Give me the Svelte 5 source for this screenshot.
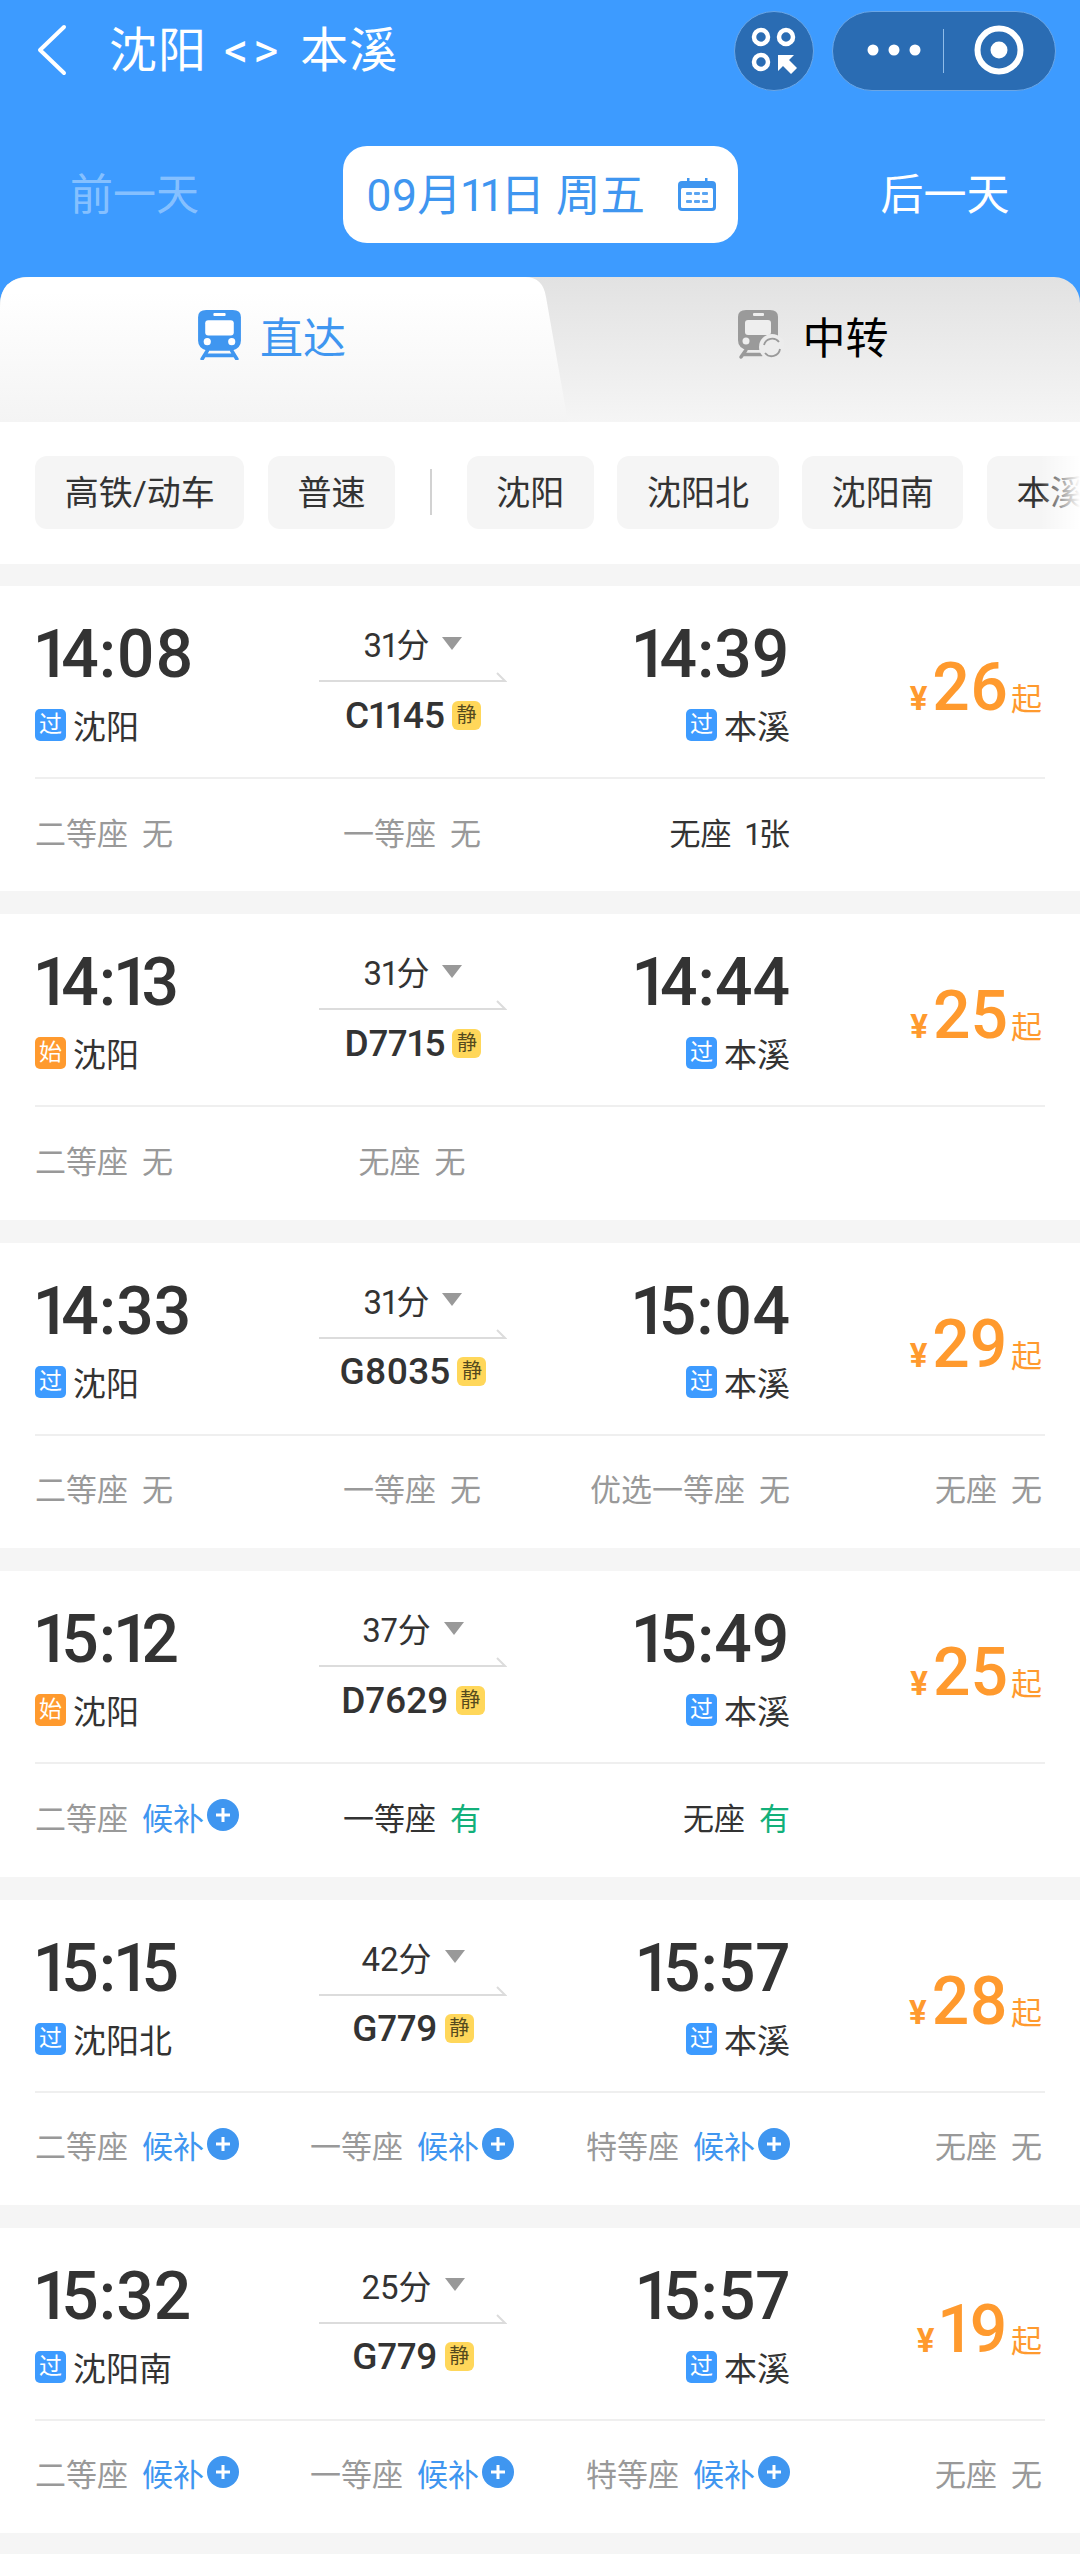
<script>
  const full = (name) => ({ name, status: '无', kind: 'none' });
  const wait = (name) => ({ name, status: '候补', kind: 'wait' });
  const have = (name, status = '有') => ({ name, status, kind: 'have' });

  const filters = ['沈阳', '沈阳北', '沈阳南', '本溪'];

  const trains = [
    { dep: '14:08', badge: '过', from: '沈阳', dur: '31分', no: 'C1145', arr: '14:39', price: 26,
      seats: [full('二等座'), full('一等座'), { name: '无座', status: '1张', kind: 'count' }, null] },
    { dep: '14:13', badge: '始', from: '沈阳', dur: '31分', no: 'D7715', arr: '14:44', price: 25,
      seats: [full('二等座'), full('无座'), null, null] },
    { dep: '14:33', badge: '过', from: '沈阳', dur: '31分', no: 'G8035', arr: '15:04', price: 29,
      seats: [full('二等座'), full('一等座'), full('优选一等座'), full('无座')] },
    { dep: '15:12', badge: '始', from: '沈阳', dur: '37分', no: 'D7629', arr: '15:49', price: 25,
      seats: [wait('二等座'), have('一等座'), have('无座'), null] },
    { dep: '15:15', badge: '过', from: '沈阳北', dur: '42分', no: 'G779', arr: '15:57', price: 28,
      seats: [wait('二等座'), wait('一等座'), wait('特等座'), full('无座')] },
    { dep: '15:32', badge: '过', from: '沈阳南', dur: '25分', no: 'G779', arr: '15:57', price: 19,
      seats: [wait('二等座'), wait('一等座'), wait('特等座'), full('无座')] },
  ];
</script>

<div class="page">
  <header class="header">
    <div class="nav">
      <svg class="back" width="32" height="52" viewBox="0 0 32 52">
        <polyline points="28,3 4,26 28,49" fill="none" stroke="#fff" stroke-width="4" stroke-linecap="round" stroke-linejoin="round" />
      </svg>
      <div class="title">沈阳 <span class="swap">&lt;&gt;</span> 本溪</div>
      <div class="actions">
        <svg class="round-btn" width="80" height="80" viewBox="0 0 80 80">
          <circle cx="40" cy="40" r="39.5" fill="#2a6cb3" stroke="#6aa6e6" stroke-width="1" />
          <g fill="none" stroke="#fff" stroke-width="4.5">
            <circle cx="27" cy="26" r="7" />
            <circle cx="52" cy="26" r="7" />
            <circle cx="27" cy="51" r="7" />
          </g>
          <path d="M44 44H60L55 49L63 57L57 63L49 55L44 60Z" fill="#fff" />
        </svg>
        <svg class="capsule" width="224" height="80" viewBox="0 0 224 80">
          <rect x="0.5" y="0.5" width="223" height="79" rx="39.5" fill="#2a6cb3" stroke="#6aa6e6" stroke-width="1" />
          <circle cx="41" cy="39" r="5.5" fill="#fff" />
          <circle cx="62" cy="39" r="5.5" fill="#fff" />
          <circle cx="83" cy="39" r="5.5" fill="#fff" />
          <rect x="111" y="18" width="1" height="44" fill="#8fbce9" />
          <circle cx="167" cy="39" r="21.5" fill="none" stroke="#fff" stroke-width="6" />
          <circle cx="167" cy="39" r="8.5" fill="#fff" />
        </svg>
      </div>
    </div>

    <div class="date-row">
      <span class="day prev">前一天</span>
      <div class="date">
        <span class="date-text">09月11日 周五</span>
        <svg width="38" height="33" viewBox="0 0 38 33">
          <path d="M4 3H34Q38 3 38 7V29Q38 33 34 33H4Q0 33 0 29V7Q0 3 4 3Z" fill="#3f96f0" />
          <rect x="9" y="0" width="2.5" height="6" fill="#3f96f0" />
          <rect x="27" y="0" width="2.5" height="6" fill="#3f96f0" />
          <rect x="3" y="10" width="32" height="20" rx="1.5" fill="#fff" />
          <g fill="#5ba5f2">
            <rect x="8" y="14" width="6" height="3" rx="1" />
            <rect x="16" y="14" width="6" height="3" rx="1" />
            <rect x="24" y="14" width="6" height="3" rx="1" />
            <rect x="8" y="22" width="6" height="3" rx="1" />
            <rect x="16" y="22" width="6" height="3" rx="1" />
            <rect x="24" y="22" width="6" height="3" rx="1" />
          </g>
        </svg>
      </div>
      <span class="day next">后一天</span>
    </div>

    <div class="tabs">
      <div class="tab active">
        <svg width="43" height="50" viewBox="0 0 42 49">
          <path d="M8 0H34Q42 0 42 7V30Q42 38 33 40H9Q0 38 0 30V7Q0 0 8 0Z" fill="#3f96f0" />
          <rect x="15" y="3" width="12" height="3" rx="1" fill="#fff" />
          <rect x="7" y="10" width="28" height="15" rx="3" fill="#fff" />
          <circle cx="9" cy="31" r="3.5" fill="#fff" />
          <circle cx="33" cy="31" r="3.5" fill="#fff" />
          <path d="M9 40L4 48M33 40L38 48M7 44.5H35" fill="none" stroke="#3f96f0" stroke-width="3.5" stroke-linecap="round" />
        </svg>
        <span>直达</span>
      </div>
      <div class="tab">
        <svg width="46" height="50" viewBox="0 0 46 50">
          <path d="M8 0H32Q40 0 40 7V30Q40 38 31 40H9Q0 38 0 30V7Q0 0 8 0Z" fill="#9a9a9a" />
          <rect x="15" y="3" width="11" height="3" rx="1" fill="#eee" />
          <rect x="7" y="10" width="26" height="15" rx="3" fill="#eee" />
          <circle cx="8" cy="31" r="3.5" fill="#eee" />
          <path d="M8 40L3 47M6 44.5H24" fill="none" stroke="#9a9a9a" stroke-width="3.5" stroke-linecap="round" />
          <circle cx="34" cy="37" r="13" fill="#ececec" />
          <path d="M26 35A8.5 8.5 0 0 1 41 32M42 39A8.5 8.5 0 0 1 27 43" fill="none" stroke="#9a9a9a" stroke-width="1.8" />
        </svg>
        <span>中转</span>
      </div>
    </div>
  </header>

  <div class="filters">
    <span class="chip">高铁/动车</span>
    <span class="chip">普速</span>
    <i class="sep"></i>
    {#each filters as f}
      <span class="chip">{f}</span>
    {/each}
  </div>

  <div class="list">
    {#each trains as t}
      <section class="card">
        <div class="grid top">
          <div class="stop">
            <div class="time">{#each t.dep as ch}<span class:one={ch === '1'}>{ch}</span>{/each}</div>
            <div class="station">
              <b class="badge" class:start={t.badge === '始'}>{t.badge}</b>{t.from}
            </div>
          </div>
          <div class="mid">
            <div class="dur">{t.dur}<i class="tri"></i></div>
            <svg class="line" width="188" height="10" viewBox="0 0 188 10">
              <path d="M0 9H186L178 1" fill="none" stroke="#dcdcdc" stroke-width="2" />
            </svg>
            <div class="no">{t.no}<b class="quiet">静</b></div>
          </div>
          <div class="stop end">
            <div class="time">{#each t.arr as ch}<span class:one={ch === '1'}>{ch}</span>{/each}</div>
            <div class="station">
              <b class="badge">过</b>本溪
            </div>
          </div>
          <div class="price">
            <span class="yen">¥</span><span class="num">{t.price}</span><span class="qi">起</span>
          </div>
        </div>
        <div class="rule"></div>
        <div class="grid seats">
          {#each t.seats as s}
            <div class="seat {s ? s.kind : ''}">
              {#if s}
                <span class="seat-name">{s.name}</span>
                <span class="seat-status">{s.status}</span>
                {#if s.kind === 'wait'}
                  <svg class="plus" width="32" height="32" viewBox="0 0 32 32">
                    <circle cx="16" cy="16" r="16" fill="#3f96f0" />
                    <path d="M16 9V23M9 16H23" stroke="#fff" stroke-width="3" />
                  </svg>
                {/if}
              {/if}
            </div>
          {/each}
        </div>
      </section>
    {/each}
  </div>
</div>

<style>
  :global(body) {
    margin: 0;
    background: #f5f5f5;
  }
  .page {
    min-height: 2554px;
    font-family: Roboto, "Noto Sans CJK SC", sans-serif;
    font-variant-numeric: proportional-nums;
    color: #333;
    background: #f5f5f5;
  }
  .header {
    background: #3d9bff;
    height: 422px;
  }
  .nav {
    display: flex;
    align-items: center;
    height: 102px;
    padding: 0 24px 0 36px;
  }
  .title {
    margin-left: 41px;
    margin-top: -10px;
    font-size: 48px;
    letter-spacing: 1px;
    word-spacing: 4px;
    color: #fff;
  }
  .swap {
    letter-spacing: 5px;
  }
  .back {
    margin-top: -2px;
  }
  .actions {
    display: flex;
    gap: 18px;
    margin-left: auto;
  }
  .date-row {
    display: flex;
    align-items: center;
    margin-top: 44px;
    height: 97px;
  }
  .day {
    font-size: 43px;
    text-align: center;
    margin-top: -8px;
  }
  .prev {
    padding-right: 72px;
    width: 269px;
    color: rgba(255, 255, 255, 0.4);
  }
  .next {
    padding-left: 74px;
    width: 266px;
    color: #fff;
  }
  .date {
    display: flex;
    flex-shrink: 0;
    align-items: center;
    gap: 33px;
    width: 395px;
    box-sizing: border-box;
    height: 97px;
    margin-left: 2px;
    padding-left: 23px;
    border-radius: 24px;
    background: #fff;
    color: #3f96f0;
    font-size: 44.5px;
    white-space: nowrap;
  }
  .date-text {
    margin-top: -7px;
  }
  .tabs {
    display: flex;
    height: 145px;
    margin-top: 34px;
    border-radius: 26px 26px 0 0;
    background: linear-gradient(#e2e2e2, #f5f5f5);
    font-size: 43px;
  }
  .tab {
    display: flex;
    flex: 1;
    align-items: center;
    justify-content: center;
    gap: 19px;
    padding-right: 22px;
    padding-bottom: 30px;
    color: #000;
  }
  .tab.active {
    flex: 0 0 568px;
    box-sizing: border-box;
    background: linear-gradient(#fff 10%, #f4f4f4);
    clip-path: path("M0 30Q0 0 30 0L525 0Q543 0 546 20L568 145L0 145Z");
    color: #3f96f0;
    padding-right: 24px;
  }
  .filters {
    position: relative;
    display: flex;
    align-items: center;
    gap: 23.3px;
    height: 142px;
    padding: 0 0 2px 35px;
    box-sizing: border-box;
    overflow: hidden;
    background: #fff;
    margin-bottom: 22px;
  }
  .filters::after {
    content: "";
    position: absolute;
    top: 0;
    right: 0;
    bottom: 0;
    width: 40px;
    background: linear-gradient(to right, rgba(255, 255, 255, 0), #fff);
  }
  .chip {
    flex-shrink: 0;
    height: 73px;
    padding: 0 29.7px;
    border-radius: 12px;
    background: #f5f5f5;
    font-size: 34px;
    line-height: 75px;
    white-space: nowrap;
  }
  .sep {
    flex-shrink: 0;
    width: 2px;
    height: 46px;
    margin: 0 11px 0 12px;
    background: #d2d2d2;
  }
  .list {
    display: flex;
    flex-direction: column;
    gap: 23px;
  }
  .card {
    height: 305.4px;
    background: #fff;
  }
  .grid {
    display: grid;
    grid-template-columns: 255px 244px 256px 1fr;
    padding: 0 38px 0 35px;
  }
  .top {
    height: 191px;
    box-sizing: border-box;
    padding-top: 36px;
  }
  .time {
    font-size: 66px;
    line-height: 64px;
    font-weight: 500;
    margin-top: 1px;
  }
  .one {
    margin-right: -4px;
    margin-left: -1px;
  }
  .one:first-child {
    margin-left: 0;
  }
  .station {
    display: flex;
    align-items: center;
    height: 34px;
    margin-top: 21px;
    font-size: 33px;
  }
  .badge {
    width: 31px;
    height: 32px;
    margin-right: 7px;
    border-radius: 5px;
    background: #3d9bff;
    color: #fff;
    font-size: 23px;
    font-weight: 400;
    line-height: 32px;
    text-align: center;
  }
  .badge.start {
    background: #ff9a2e;
  }
  .stop.end {
    display: flex;
    flex-direction: column;
    align-items: flex-end;
  }
  .mid {
    display: flex;
    flex-direction: column;
    align-items: center;
    padding-left: 2px;
  }
  .dur {
    display: flex;
    align-items: center;
    gap: 13px;
    height: 40px;
    margin-top: 1px;
    font-size: 33px;
  }
  .tri {
    width: 0;
    height: 0;
    border-left: 10px solid transparent;
    border-right: 10px solid transparent;
    border-top: 13px solid #999;
  }
  .line {
    margin-top: 9px;
  }
  .no {
    display: flex;
    align-items: center;
    gap: 7px;
    height: 40px;
    margin-top: 13px;
    font-size: 37px;
    font-weight: 500;
  }
  .quiet {
    width: 29px;
    height: 29px;
    border-radius: 6px;
    background: #ffd75a;
    color: #554a1e;
    font-size: 20px;
    font-weight: 400;
    line-height: 29px;
    text-align: center;
  }
  .price {
    display: flex;
    align-items: baseline;
    justify-content: flex-end;
    margin-top: 34px;
    color: #ff9a2e;
    height: 64px;
  }
  .yen {
    font-size: 33px;
    font-weight: 700;
    margin-right: 5px;
  }
  .num {
    font-size: 66px;
    line-height: 64px;
    font-weight: 500;
    margin-right: 3px;
  }
  .qi {
    font-size: 31px;
  }
  .rule {
    height: 2px;
    margin: 0 35px;
    background: #efefef;
  }
  .seats {
    padding-top: 32px;
  }
  .seat {
    display: flex;
    align-items: center;
    height: 40px;
    font-size: 31px;
    color: #999;
    white-space: nowrap;
  }
  .seat:nth-child(2) {
    justify-content: center;
  }
  .seat:nth-child(3),
  .seat:nth-child(4) {
    justify-content: flex-end;
  }
  .seat-status {
    margin-left: 14px;
  }
  .seat.count,
  .seat.have {
    color: #333;
  }
  .seat.have .seat-status {
    color: #12b07a;
  }
  .seat.wait .seat-status {
    color: #3f96f0;
  }
  .plus {
    flex-shrink: 0;
    margin-left: 3px;
    margin-top: -2px;
  }
</style>
